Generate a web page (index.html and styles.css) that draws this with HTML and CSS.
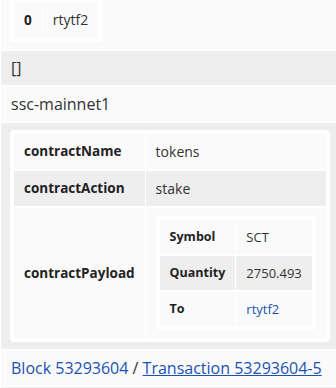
FILE: index.html
```html
<!DOCTYPE html>
<html lang="en">
<head>
  <meta charset="UTF-8" />
  <meta name="viewport" content="width=device-width, initial-scale=1.0"/>
  <title>Transaction details</title>
  <link rel="stylesheet" href="styles.css">
</head>
<body>

  <table class="grid outer">
    <!-- sender -->
    <tr>
      <td class="stub"></td>
      <td class="val">
        <div class="card">
          <table class="grid">
            <tr><th>0</th><td>rtytf2</td></tr>
          </table>
        </div>
      </td>
    </tr>

    <tr><td class="stub"></td><td class="val">[]</td></tr>
    <tr><td class="stub"></td><td class="val">ssc-mainnet1</td></tr>

    <!-- payload -->
    <tr>
      <td class="stub"></td>
      <td class="val">
        <div class="card">
          <table class="grid mid">
            <tr><th>contractName</th><td>tokens</td></tr>
            <tr><th>contractAction</th><td>stake</td></tr>
            <tr>
              <th>contractPayload</th>
              <td>
                <div class="card">
                  <table class="grid small">
                    <tr><th>Symbol</th><td>SCT</td></tr>
                    <tr><th>Quantity</th><td>2750.493</td></tr>
                    <tr><th>To</th><td><a href="#">rtytf2</a></td></tr>
                  </table>
                </div>
              </td>
            </tr>
          </table>
        </div>
      </td>
    </tr>

    <tr>
      <td class="stub"></td>
      <td class="val">
        <a href="#">Block 53293604</a> / <a href="#" class="active">Transaction 53293604-5</a>
      </td>
    </tr>
    <tr><td class="stub"></td><td class="val">&nbsp;</td></tr>
  </table>

</body>
</html>
```

FILE: styles.css
```css
html, body {
  overflow: hidden;
}

body {
  margin: 0;
  background: #fff;
  font-family: 'Open Sans', sans-serif;
  color: #333;
}

a {
  color: #1b52b3;
  text-decoration: none;
}

a.active {
  text-decoration: underline;
}

.grid {
  border-collapse: separate;
  border-spacing: 1px 2px;
  background: #fff;
  font-size: 14px;
  line-height: 20px;
}

.grid th,
.grid td {
  padding: 8px 10px;
  text-align: left;
  vertical-align: middle;
}

.grid th {
  font-weight: bold;
  color: #222;
  font-size: 13.6px;
}

.grid tr:nth-child(odd) > th,
.grid tr:nth-child(odd) > td {
  background: #fafafa;
}

.grid tr:nth-child(even) > th,
.grid tr:nth-child(even) > td {
  background: #eeeeee;
}

.grid.mid {
  line-height: 19px;
}

.grid.mid th {
  font-size: 13.5px;
}

.grid.small {
  font-size: 13px;
  line-height: 18px;
}

.grid.small th {
  font-size: 12.5px;
}

.outer {
  margin: -10px 0 0 -1px;
  font-size: 16px;
  line-height: 22px;
}

.outer > tbody > tr > td.val {
  padding: 6px 9px 6px 10px;
}

.outer > tbody > tr:nth-child(1) > td.val,
.outer > tbody > tr:nth-child(4) > td.val {
  padding: 7px 9px;
}

.outer > tbody > tr:nth-child(1) > td.val {
  padding-top: 6px;
}

.outer > tbody > tr > td.stub {
  width: 2px;
  padding: 0;
}

.card {
  display: inline-block;
  vertical-align: top;
  background: #fff;
  border-radius: 4px;
  padding: 2px 3px;
}
```
